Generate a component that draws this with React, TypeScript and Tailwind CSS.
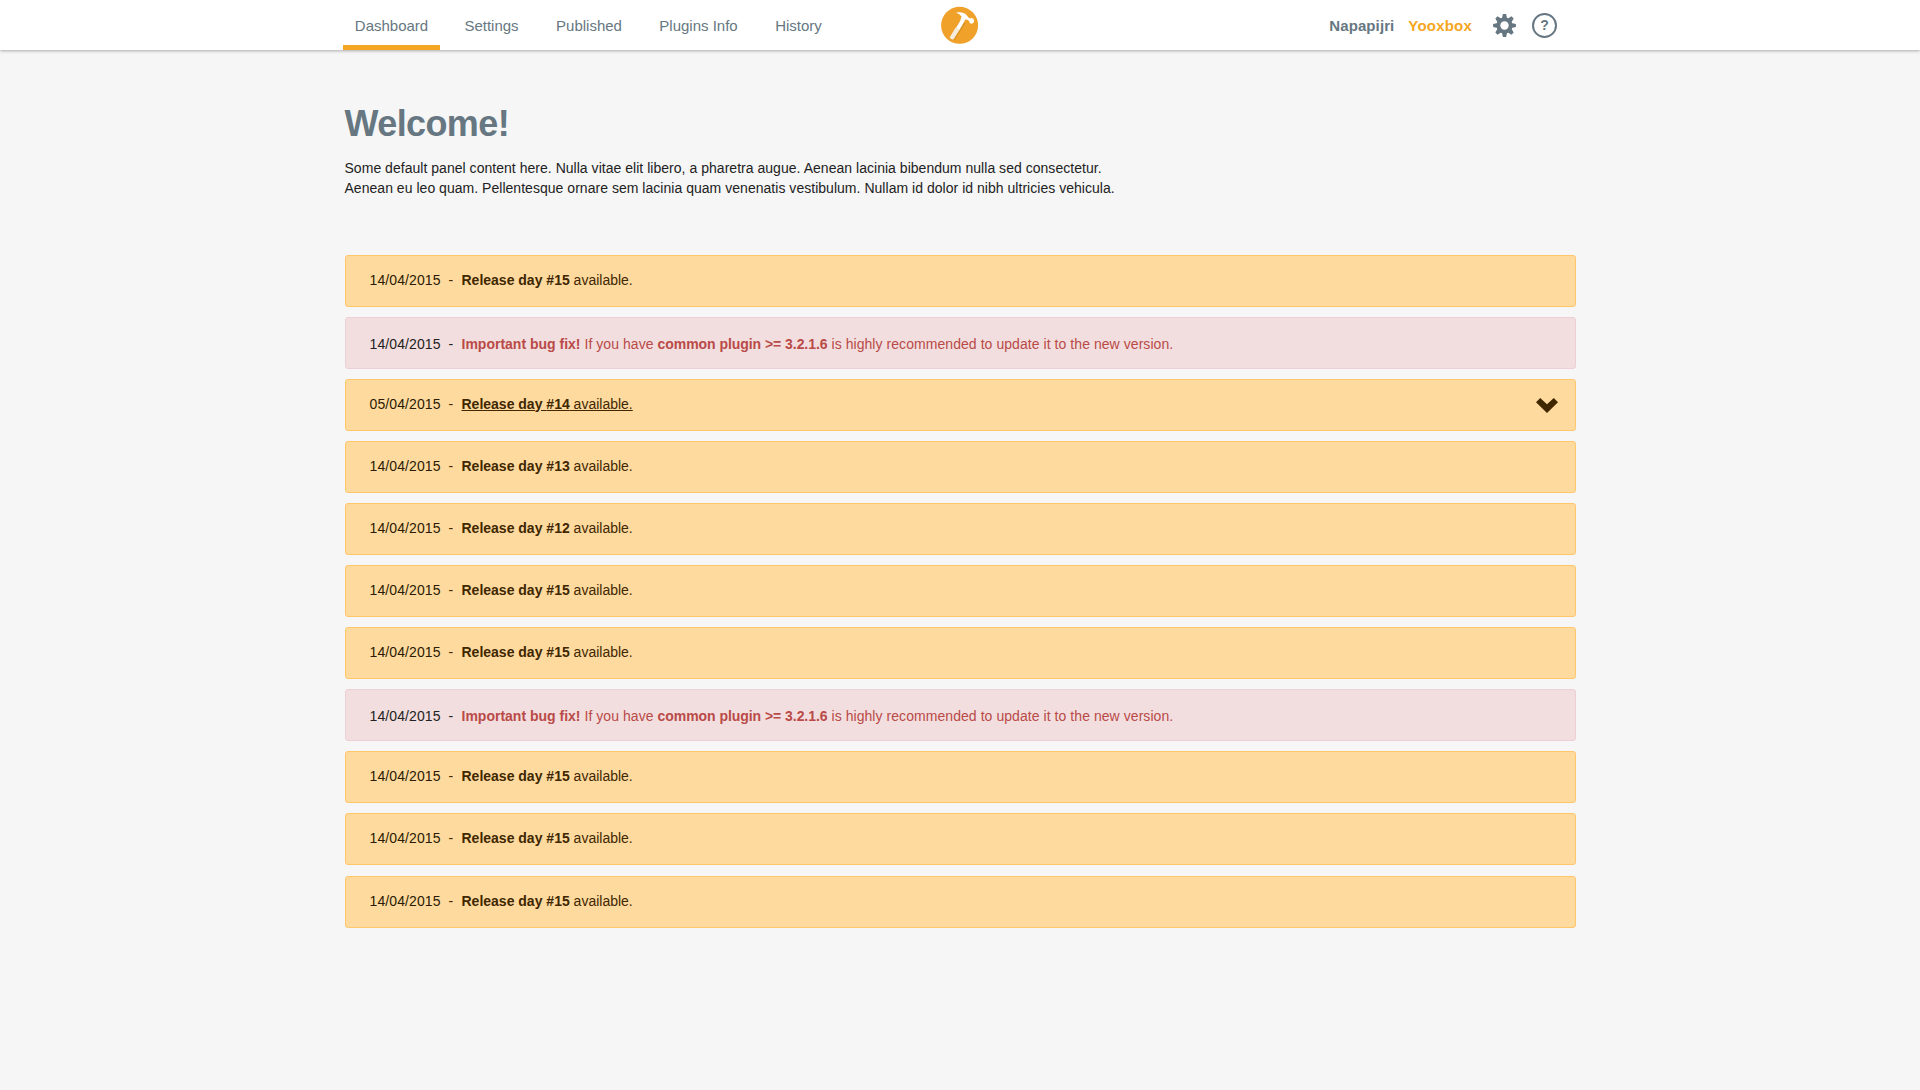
import React from "react";

type Notice = {
  date: string;
  kind: "release" | "bug";
  day?: string;
  open?: boolean;
};

const notices: Notice[] = [
  { date: "14/04/2015", kind: "release", day: "#15" },
  { date: "14/04/2015", kind: "bug" },
  { date: "05/04/2015", kind: "release", day: "#14", open: true },
  { date: "14/04/2015", kind: "release", day: "#13" },
  { date: "14/04/2015", kind: "release", day: "#12" },
  { date: "14/04/2015", kind: "release", day: "#15" },
  { date: "14/04/2015", kind: "release", day: "#15" },
  { date: "14/04/2015", kind: "bug" },
  { date: "14/04/2015", kind: "release", day: "#15" },
  { date: "14/04/2015", kind: "release", day: "#15" },
  { date: "14/04/2015", kind: "release", day: "#15" },
];

const tabs = [
  { label: "Dashboard", width: "w-[97px]", active: true },
  { label: "Settings", width: "w-[79px]" },
  { label: "Published", width: "w-[92px]" },
  { label: "Plugins Info", width: "w-[103px]" },
  { label: "History", width: "w-[73px]" },
];

function Logo() {
  return (
    <svg className="h-[38px] w-[38px]" viewBox="0 0 38 38" aria-label="Hammer">
      <circle cx="18.6" cy="19.3" r="18.5" fill="#efa12a" />
      <path d="M20.5 14.5 24.6 17 13.6 34 9.6 32.6Z" fill="#c98316" opacity=".55" />
      <path d="M20 13.4 23.4 15.4 18.4 24 15 22Z" fill="#fff" />
      <path d="M14.6 21.4 18.6 23.7 12.6 33.2Q10.6 34 8.6 31.4Z" fill="#f7ecdb" />
      <path
        d="M15.2 6.8C19.2 5.6 23 6.6 25.6 8.9L27.2 11.2 29.2 12.4 30.8 11.8 33 13.6 33 16 31 17.8 28.8 17.2 28.2 15 25.8 13.6 24 13.8 23 16 19.4 13.8 20.6 10.8C19.4 8.8 17.6 7.6 15.2 6.8Z"
        fill="#fff"
      />
    </svg>
  );
}

function Gear() {
  return (
    <svg className="h-[23px] w-[23px]" viewBox="-11.5 -11.5 23 23" fill="#667782" aria-label="Settings">
      {[0, 45, 90, 135].map((a) => (
        <path key={a} transform={`rotate(${a})`} d="M-2.6-7 -1.6-11.4H1.6L2.6-7V7L1.6 11.4H-1.6L-2.6 7Z" />
      ))}
      <circle r="8" />
      <circle r="4.2" fill="#fff" />
    </svg>
  );
}

function Chevron() {
  return (
    <svg className="h-[15px] w-[22px]" viewBox="0 0 22 15" fill="#402700" aria-label="Expand">
      <path d="M0 4.2 4.2 0 11 6.3 17.8 0 22 4.2 11 15Z" />
    </svg>
  );
}

function Row({ notice }: { notice: Notice }) {
  if (notice.kind === "bug") {
    return (
      <li className="flex h-[52px] items-center rounded-[3px] border border-[#ecd0d5] bg-[#f2dede] pt-px pl-6">
        <span className="w-[79px] tracking-[0.1px] text-[#222]">{notice.date}</span>
        <span className="w-[13px] text-[#222]">-</span>
        <p className="tracking-[0.06px] text-[#b94a48]">
          <b className="tracking-normal">Important bug fix!</b> If you have{" "}
          <b className="tracking-[-0.05px]">common plugin &gt;= 3.2.1.6</b> is highly recommended to update it to the
          new version.
        </p>
      </li>
    );
  }
  return (
    <li className="flex h-[52px] items-center rounded-[3px] border border-[#ffc66b] bg-[#ffda9f] pr-[17px] pb-[3px] pl-6 text-[#402700] last:mt-px">
      <span className="w-[79px] tracking-[0.1px] text-[#2b1b02]">{notice.date}</span>
      <span className="w-[13px]">-</span>
      <p className={notice.open ? "underline" : ""}>
        <b>Release day {notice.day}</b> available.
      </p>
      {notice.open && (
        <span className="mt-1 ml-auto">
          <Chevron />
        </span>
      )}
    </li>
  );
}

export default function App() {
  return (
    <div className="min-h-[1090px] bg-[#f6f6f6] font-['Liberation_Sans',Arial,sans-serif] text-sm text-[#222]">
      <header className="h-[50px] bg-white shadow-[0_1px_3px_rgba(0,0,0,0.3)]">
        <div className="mx-auto grid h-full w-[1234px] grid-cols-[1fr_38px_1fr]">
          <nav className="flex gap-3 text-[15px] text-[#667782]">
            {tabs.map((t) => (
              <a
                key={t.label}
                className={`${t.width} flex h-[50px] shrink-0 items-center justify-center border-b-[5px] pt-[6px] whitespace-nowrap ${
                  t.active ? "border-[#f5a623]" : "border-transparent"
                }`}
              >
                {t.label}
              </a>
            ))}
          </nav>
          <div className="pt-[6px]">
            <Logo />
          </div>
          <div className="flex items-center justify-end pr-5 text-[15px] font-bold text-[#667782]">
            <span className="mr-[14px] pt-[2px] tracking-[0.1px]">Napapijri</span>
            <span className="mr-[21px] pt-[2px] tracking-[0.2px] text-[#f5a623]">Yooxbox</span>
            <span className="mr-4">
              <Gear />
            </span>
            <span className="flex h-[25px] w-[25px] items-center justify-center rounded-full border-2 border-[#667782] text-sm">
              ?
            </span>
          </div>
        </div>
      </header>
      <main className="mx-auto w-[1231px] pt-[54px]">
        <h1 className="text-4xl leading-10 font-bold tracking-[-0.6px] text-[#667782]">Welcome!</h1>
        <p className="mt-[14px] leading-5 tracking-[0.03px]">
          Some default panel content here. Nulla vitae elit libero, a pharetra augue. Aenean lacinia bibendum nulla sed
          consectetur.
          <br />
          Aenean eu leo quam. Pellentesque ornare sem lacinia quam venenatis vestibulum. Nullam id dolor id nibh
          ultricies vehicula.
        </p>
        <ul className="mt-[57px] flex flex-col gap-[10px]">
          {notices.map((n, i) => (
            <Row key={i} notice={n} />
          ))}
        </ul>
      </main>
    </div>
  );
}
